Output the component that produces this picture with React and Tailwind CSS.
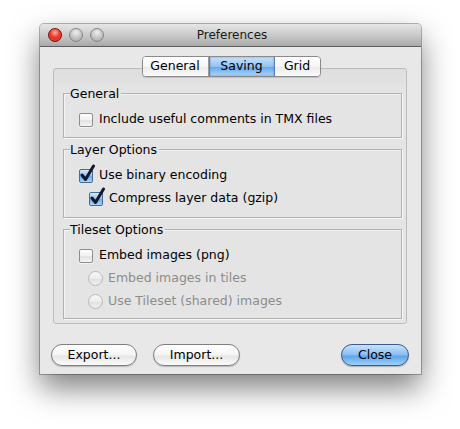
import React from "react";

const font = { fontFamily: '"DejaVu Sans", "Liberation Sans", sans-serif' };

function Light({ red }) {
  return red ? (
    <div className="w-[14px] h-[14px] rounded-full border border-[#7a1010] bg-[radial-gradient(circle_at_50%_30%,#ffb0a8_0%,#f03a2a_45%,#b00d0d_100%)] shadow-[inset_0_-1px_2px_rgba(255,120,100,0.6)]" />
  ) : (
    <div className="w-[14px] h-[14px] rounded-full border border-[#858585] bg-[radial-gradient(circle_at_50%_30%,#eeeeee_0%,#c2c2c2_55%,#a0a0a0_100%)]" />
  );
}

function Checkbox({ checked }) {
  if (checked) {
    return (
      <div className="relative w-[14px] h-[14px] shrink-0">
        <div className="w-[14px] h-[14px] rounded-[2px] border border-[#4a6a96] bg-[linear-gradient(#d6ebfc,#8ec2f0_50%,#6aaeeb_55%,#a8d6fb)]" />
        <svg className="absolute left-[0px] top-[-5px]" width="17" height="18" viewBox="0 0 17 18">
          <path d="M3 11 L6.5 15.5 L14.5 2" fill="none" stroke="#15182a" strokeWidth="3" strokeLinecap="round" strokeLinejoin="round" />
        </svg>
      </div>
    );
  }
  return (
    <div className="w-[14px] h-[14px] shrink-0 rounded-[2px] border border-[#8e8e8e] bg-[linear-gradient(#ffffff,#f0f0f0_50%,#e2e2e2_55%,#f6f6f6)] shadow-[0_1px_0_rgba(255,255,255,0.6)]" />
  );
}

function Radio() {
  return (
    <div className="w-[15px] h-[15px] shrink-0 rounded-full border border-[#b8b8b8] bg-[linear-gradient(#f9f9f9,#ececec_50%,#e0e0e0_55%,#f0f0f0)]" />
  );
}

function Group({ title, h, mt, children }) {
  return (
    <div
      className={`relative border border-[#b0b0b0] shadow-[inset_1px_1px_0_rgba(255,255,255,0.6),1px_1px_0_rgba(255,255,255,0.7)] pt-[14px] ${h} ${mt}`}
    >
      <div className="absolute left-[6px] top-[-8px] bg-[#e4e4e4] pr-[2px] text-[12.5px] leading-[16px] text-black">
        {title}
      </div>
      {children}
    </div>
  );
}

function Row({ indent, children }) {
  return (
    <div className={`flex items-center h-[23px] gap-[6px] text-[12.5px] text-black ${indent ? "pl-[25px]" : "pl-[15px]"}`}>
      {children}
    </div>
  );
}

function Button({ children, w, primary }) {
  return (
    <div
      className={`h-[22px] ${w} rounded-full flex items-center justify-center text-[12.5px] text-black ${
        primary
          ? "border border-[#3d5a8a] bg-[linear-gradient(#c8e2fb,#88bdf2_50%,#5fa3ea_55%,#9ed0fb)] shadow-[0_1px_1px_rgba(0,0,0,0.25)]"
          : "border border-[#7e7e7e] bg-[linear-gradient(#ffffff,#f4f4f4_50%,#e6e6e6_55%,#fbfbfb)] shadow-[0_1px_1px_rgba(0,0,0,0.2)]"
      }`}
    >
      {children}
    </div>
  );
}

export default function App() {
  return (
    <div className="w-[460px] h-[429px] bg-white pt-[24px] pl-[40px]" style={font}>
      <div className="w-[381px] h-[350px] flex flex-col bg-[#e8e8e8] rounded-t-[4px] shadow-[0_14px_30px_rgba(0,0,0,0.5),0_0_0_1px_rgba(0,0,0,0.28)]">
        {/* Title bar */}
        <div className="relative h-[23px] shrink-0 flex items-center rounded-t-[4px] bg-[linear-gradient(#e6e6e6,#c4c4c4_60%,#a9a9a9)] border-b border-[#5e5e5e]">
          <div className="flex gap-[7px] pl-[8px]">
            <Light red />
            <Light />
            <Light />
          </div>
          <div className="absolute inset-0 flex items-center justify-center text-[12px] text-[#1a1a1a] pl-[3px]">
            Preferences
          </div>
        </div>

        {/* Body */}
        <div className="flex flex-col pl-[13px] pr-[14px]">
          {/* Tabs */}
          <div className="relative z-10 flex justify-center mt-[9px] pl-[2px]">
            <div className="flex h-[21px] rounded-[4px] border border-[#8a8a8a] overflow-hidden text-[12.5px] text-black shadow-[0_1px_1px_rgba(0,0,0,0.15)]">
              <div className="w-[66px] flex items-center justify-center bg-[linear-gradient(#ffffff,#f6f6f6_50%,#ebebeb_55%,#fafafa)] border-r border-[#9a9a9a]">
                General
              </div>
              <div className="w-[66px] flex items-center justify-center bg-[linear-gradient(#c9e3fb,#91c3f3_50%,#6aaaec_55%,#a9d6fc)] border-x border-[#5b7fb5] shadow-[inset_0_0_2px_rgba(40,90,170,0.6)]">
                Saving
              </div>
              <div className="w-[45px] flex items-center justify-center bg-[linear-gradient(#ffffff,#f6f6f6_50%,#ebebeb_55%,#fafafa)]">
                Grid
              </div>
            </div>
          </div>

          {/* Tab frame */}
          <div className="-mt-[9px] h-[256px] rounded-[3px] border border-[#bdbdbd] bg-[linear-gradient(#dedede,#e2e2e2_16px,#e4e4e4_17px,#e4e4e4)] pt-[24px] pl-[9px] pr-[4px]">
            <Group title="General" h="h-[45px]" mt="">
              <Row>
                <Checkbox />
                <span>Include useful comments in TMX files</span>
              </Row>
            </Group>
            <Group title="Layer Options" h="h-[69px]" mt="mt-[11px]">
              <Row>
                <Checkbox checked />
                <span>Use binary encoding</span>
              </Row>
              <Row indent>
                <Checkbox checked />
                <span>Compress layer data (gzip)</span>
              </Row>
            </Group>
            <Group title="Tileset Options" h="h-[90px]" mt="mt-[11px]">
              <Row>
                <Checkbox />
                <span>Embed images (png)</span>
              </Row>
              <Row indent>
                <div className="-ml-[1px] flex items-center gap-[5px]">
                  <Radio />
                  <span className="text-[#8c8c8c]">Embed images in tiles</span>
                </div>
              </Row>
              <Row indent>
                <div className="-ml-[1px] flex items-center gap-[5px]">
                  <Radio />
                  <span className="text-[#8c8c8c]">Use Tileset (shared) images</span>
                </div>
              </Row>
            </Group>
          </div>
        </div>

        {/* Buttons */}
        <div className="flex items-center mt-[20px] pl-[11px] pr-[12px]">
          <Button w="w-[86px]">Export...</Button>
          <div className="ml-[16px]">
            <Button w="w-[87px]">Import...</Button>
          </div>
          <div className="ml-auto">
            <Button w="w-[68px]" primary>
              Close
            </Button>
          </div>
        </div>
      </div>
    </div>
  );
}
